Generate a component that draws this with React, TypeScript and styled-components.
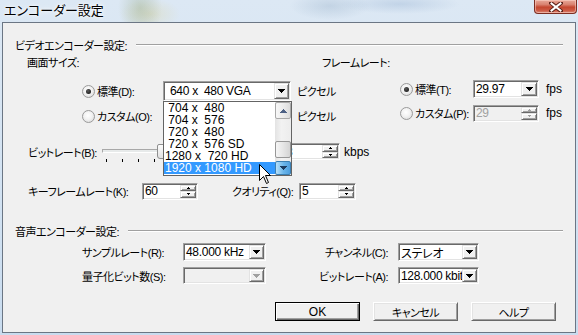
import React from 'react';
import styled, { createGlobalStyle, css } from 'styled-components';

const GlobalStyle = createGlobalStyle`
  html, body { margin: 0; padding: 0; }
  body {
    width: 578px; height: 335px; overflow: hidden; background: #cfdff0;
    font-family: "Liberation Sans", "Noto Sans CJK JP", sans-serif;
    font-size: 12px; color: #000;
    font-feature-settings: "palt" 1;
  }
  * { box-sizing: border-box; }
`;

const jp = css`
  font-size: 11px;
  letter-spacing: -0.5px;
`;

const sunken = css`
  border: 1px solid;
  border-color: #a0a0a0 #ffffff #ffffff #a0a0a0;
  box-shadow: inset 1px 1px 0 #696969, inset -1px -1px 0 #e3e3e3;
  padding: 1px;
`;

const raised = css`
  background: #f0f0f0;
  border: 1px solid;
  border-color: #e3e3e3 #696969 #696969 #e3e3e3;
  box-shadow: inset 1px 1px 0 #ffffff, inset -1px -1px 0 #a0a0a0;
`;

const Window = styled.div`
  width: 578px;
  height: 335px;
  display: flex;
  flex-direction: column;
  padding: 0 2px 2px 2px;
  background:
    radial-gradient(ellipse 22px 30px at 140px 8px, rgba(140, 160, 120, 0.35), transparent),
    radial-gradient(ellipse 30px 16px at 150px 14px, rgba(220, 210, 150, 0.35), transparent),
    radial-gradient(ellipse 40px 14px at 330px 6px, rgba(120, 150, 180, 0.25), transparent),
    radial-gradient(ellipse 60px 10px at 400px 4px, rgba(90, 130, 180, 0.2), transparent),
    linear-gradient(180deg, #dce8f4 0%, #d2e2f2 60%, #c9dcef 100%);
`;

const TitleBar = styled.div`
  height: 22px;
  flex: none;
  display: flex;
  align-items: flex-start;
  justify-content: space-between;
`;

const Title = styled.span`
  font-size: 13px;
  line-height: 21px;
  padding-left: 2px;
  color: #000;
  text-shadow: 0 0 6px #fff, 0 0 3px #fff;
`;

const CloseButton = styled.div`
  width: 43px;
  height: 14px;
  margin-right: -1px;
  border: 1px solid #7d2e22;
  border-top: none;
  border-radius: 0 0 4px 4px;
  background: linear-gradient(180deg, #e8a898 0%, #d98270 35%, #c4472f 55%, #cc5a44 80%, #d98a78 100%);
  box-shadow: inset 0 0 0 1px rgba(255, 220, 210, 0.5);
  display: flex;
  align-items: center;
  justify-content: center;
`;

const Client = styled.div`
  flex: 1;
  display: flex;
  flex-direction: column;
  background: #f0f0f0;
  border: 1px solid #6b7684;
`;

const SectionHeader = styled.div<{ $mt: number }>`
  display: flex;
  align-items: center;
  height: 14px;
  margin-top: ${(p) => p.$mt}px;
  padding: 0 12px 0 12px;
  flex: none;
`;

const HeaderText = styled.span`
  ${jp};
  white-space: nowrap;
`;

const Rule = styled.div`
  flex: 1;
  margin-left: 9px;
  height: 2px;
  border-top: 1px solid #a0a0a0;
  border-bottom: 1px solid #ffffff;
`;

const TopGrid = styled.div`
  display: grid;
  grid-template-columns: 319px 1fr;
  margin-top: 3px;
  flex: none;
`;

const Column = styled.div`
  display: flex;
  flex-direction: column;
`;

const Row = styled.div<{ $mt: number; $h: number; $pl?: number }>`
  display: flex;
  align-items: center;
  flex: none;
  height: ${(p) => p.$h}px;
  margin-top: ${(p) => p.$mt}px;
  padding-left: ${(p) => p.$pl ?? 0}px;
`;

const Label = styled.span<{ $w?: number; $ml?: number; $right?: boolean }>`
  ${jp};
  flex: none;
  white-space: nowrap;
  ${(p) => (p.$w ? `width: ${p.$w}px;` : '')}
  margin-left: ${(p) => p.$ml ?? 0}px;
  text-align: ${(p) => (p.$right ? 'right' : 'left')};
`;

const Unit = styled.span<{ $ml?: number }>`
  flex: none;
  white-space: nowrap;
  margin-left: ${(p) => p.$ml ?? 0}px;
`;

const Radio = styled.span<{ $checked?: boolean }>`
  flex: none;
  width: 13px;
  height: 13px;
  border-radius: 50%;
  border: 1px solid #9a9a9a;
  background: radial-gradient(circle at 45% 40%, #ffffff 0%, #f2f2f2 45%, #d4d4d4 100%);
  display: flex;
  align-items: center;
  justify-content: center;
  margin-right: 2px;
  &::after {
    content: '';
    width: 5px;
    height: 5px;
    border-radius: 50%;
    background: radial-gradient(circle at 40% 35%, #5a5a5a, #0a0a0a);
    display: ${(p) => (p.$checked ? 'block' : 'none')};
  }
`;

const Field = styled.div<{ $w: number; $h: number; $ml?: number; $disabled?: boolean }>`
  ${sunken};
  position: relative;
  flex: none;
  width: ${(p) => p.$w}px;
  height: ${(p) => p.$h}px;
  margin-left: ${(p) => p.$ml ?? 0}px;
  display: flex;
  align-items: stretch;
  background: ${(p) => (p.$disabled ? '#f0f0f0' : '#ffffff')};
`;

const FieldText = styled.span<{ $pl?: number; $gray?: boolean }>`
  flex: 1;
  min-width: 0;
  display: flex;
  align-items: center;
  padding-left: ${(p) => p.$pl ?? 1}px;
  white-space: pre;
  overflow: hidden;
  letter-spacing: -0.3px;
  color: ${(p) => (p.$gray ? '#a0a0a0' : '#000')};
`;

const ArrowBtn = styled.span<{ $w: number }>`
  ${raised};
  flex: none;
  width: ${(p) => p.$w}px;
  display: flex;
  align-items: center;
  justify-content: center;
`;

const SpinBtns = styled.span`
  flex: none;
  width: 16px;
  display: flex;
  flex-direction: column;
`;

const SpinBtn = styled.span`
  ${raised};
  flex: 1;
  display: flex;
  align-items: center;
  justify-content: center;
`;

const SliderBox = styled.div<{ $w: number }>`
  position: relative;
  flex: none;
  align-self: flex-start;
  width: ${(p) => p.$w}px;
  height: 19px;
  display: flex;
  flex-direction: column;
`;

const Channel = styled.div`
  margin-top: 6px;
  height: 4px;
  border: 1px solid;
  border-color: #a8a8a8 #ffffff #ffffff #a8a8a8;
  background: #e7eaea;
`;

const Ticks = styled.div`
  display: flex;
  gap: 15px;
  margin-top: 6px;
  padding-left: 4px;
`;

const Tick = styled.span`
  width: 1px;
  height: 3px;
  background: #000;
  flex: none;
`;

const Thumb = styled.span`
  position: absolute;
  left: 55px;
  top: 1px;
  width: 11px;
  height: 15px;
  border: 1px solid #8e8f8f;
  border-radius: 2px 2px 3px 3px;
  background: linear-gradient(180deg, #fcfcfc, #e2e2e2);
`;

const ComboWrap = styled.div`
  position: relative;
  flex: none;
`;

const DropList = styled.div`
  position: absolute;
  left: 0;
  top: 100%;
  width: 129px;
  height: 75px;
  background: #fff;
  border: 1px solid #646464;
  display: flex;
  z-index: 5;
`;

const ListItems = styled.div`
  flex: 1;
  display: flex;
  flex-direction: column;
  overflow: hidden;
`;

const ListItem = styled.div<{ $sel?: boolean }>`
  height: 12px;
  line-height: 12px;
  flex: none;
  padding-left: 1px;
  white-space: pre;
  background: ${(p) => (p.$sel ? '#3399ff' : 'transparent')};
  color: ${(p) => (p.$sel ? '#fff' : '#000')};
`;

const ScrollBar = styled.div`
  flex: none;
  width: 16px;
  display: flex;
  flex-direction: column;
  background: linear-gradient(90deg, #e3e3e3, #f2f2f2 40%, #ececec);
`;

const ScrollBtn = styled.div<{ $h: number; $hot?: boolean }>`
  flex: none;
  height: ${(p) => p.$h}px;
  border: 1px solid ${(p) => (p.$hot ? '#3c7fb1' : '#a9a9a9')};
  border-radius: 2px;
  background: ${(p) =>
    p.$hot
      ? 'linear-gradient(90deg, #b9e0f8, #6ab5ea 55%, #4f9fde)'
      : 'linear-gradient(90deg, #f7f7f7, #ececec 50%, #dcdcdc)'};
  display: flex;
  align-items: center;
  justify-content: center;
`;

const Track = styled.div`
  flex: 1;
  display: flex;
  flex-direction: column;
  justify-content: flex-end;
  padding-bottom: 3px;
`;

const ScrollThumb = styled.div`
  height: 17px;
  border: 1px solid #979797;
  border-radius: 2px;
  background: linear-gradient(90deg, #f5f5f5, #e6e6e6 50%, #d4d4d4);
`;

const CursorLayer = styled.svg`
  position: absolute;
  left: 95px;
  top: 62px;
  z-index: 6;
`;

const ButtonRow = styled.div`
  display: flex;
  gap: 13px;
  margin-top: 18px;
  padding-left: 272px;
  flex: none;
`;

const PushButton = styled.div<{ $default?: boolean }>`
  width: 85px;
  height: 19px;
  display: flex;
  align-items: center;
  justify-content: center;
  background: #f0f0f0;
  border: 1px solid;
  ${(p) =>
    p.$default
      ? css`
          border-color: #000;
          box-shadow: inset 1px 1px 0 #fff, inset -1px -1px 0 #696969, inset -2px -2px 0 #a0a0a0;
        `
      : css`
          border-color: #fff #696969 #696969 #fff;
          box-shadow: inset 1px 1px 0 #e3e3e3, inset -1px -1px 0 #a0a0a0;
        `}
`;

const ButtonText = styled.span<{ $latin?: boolean }>`
  font-size: ${(p) => (p.$latin ? '12px' : '11px')};
  letter-spacing: ${(p) => (p.$latin ? '0' : '-0.5px')};
`;

const PixelArrow: React.FC<{ up?: boolean; color?: string }> = ({ up, color = '#000' }) => (
  <svg width="7" height="4" shapeRendering="crispEdges" style={up ? { transform: 'scaleY(-1)' } : undefined}>
    <rect x="0" y="0" width="7" height="1" fill={color} />
    <rect x="1" y="1" width="5" height="1" fill={color} />
    <rect x="2" y="2" width="3" height="1" fill={color} />
    <rect x="3" y="3" width="1" height="1" fill={color} />
  </svg>
);

const TinyArrow: React.FC<{ up?: boolean; color?: string }> = ({ up, color = '#000' }) => (
  <svg width="3" height="2" shapeRendering="crispEdges">
    {up ? (
      <>
        <rect x="1" y="0" width="1" height="1" fill={color} />
        <rect x="0" y="1" width="3" height="1" fill={color} />
      </>
    ) : (
      <>
        <rect x="0" y="0" width="3" height="1" fill={color} />
        <rect x="1" y="1" width="1" height="1" fill={color} />
      </>
    )}
  </svg>
);

const Combo: React.FC<{ w: number; h: number; text: string; ml?: number; disabled?: boolean; btn?: number; pl?: number }> = ({
  w,
  h,
  text,
  ml,
  disabled,
  btn = 15,
  pl,
}) => (
  <Field $w={w} $h={h} $ml={ml} $disabled={disabled}>
    <FieldText $pl={pl}>{text}</FieldText>
    <ArrowBtn $w={btn}>
      <PixelArrow color={disabled ? '#a0a0a0' : '#000'} />
    </ArrowBtn>
  </Field>
);

const Spin: React.FC<{ w: number; h: number; text: string; ml?: number; disabled?: boolean }> = ({ w, h, text, ml, disabled }) => (
  <Field $w={w} $h={h} $ml={ml} $disabled={disabled}>
    <FieldText $gray={disabled}>{text}</FieldText>
    <SpinBtns>
      <SpinBtn>
        <TinyArrow up color={disabled ? '#a0a0a0' : '#000'} />
      </SpinBtn>
      <SpinBtn>
        <TinyArrow color={disabled ? '#a0a0a0' : '#000'} />
      </SpinBtn>
    </SpinBtns>
  </Field>
);

const sizes = [' 704 x  480', ' 704 x  576', ' 720 x  480', ' 720 x  576 SD', '1280 x  720 HD', '1920 x 1080 HD'];

export default function App() {
  return (
    <>
      <GlobalStyle />
      <Window>
        <TitleBar>
          <Title>エンコーダー設定</Title>
          <CloseButton>
            <svg width="14" height="10" viewBox="0 0 14 10">
              <path d="M2 1 L12 9 M12 1 L2 9" stroke="#5a2018" strokeWidth="4" strokeLinecap="round" />
              <path d="M2.5 1.5 L11.5 8.5 M11.5 1.5 L2.5 8.5" stroke="#fff" strokeWidth="2" strokeLinecap="square" />
            </svg>
          </CloseButton>
        </TitleBar>
        <Client>
          <SectionHeader $mt={15}>
            <HeaderText>ビデオエンコーダー設定:</HeaderText>
            <Rule />
          </SectionHeader>

          <TopGrid>
            <Column>
              <Row $mt={0} $h={14} $pl={24}>
                <Label>画面サイズ:</Label>
              </Row>
              <Row $mt={12} $h={20} $pl={79}>
                <Radio $checked />
                <Label $w={66}>標準(D):</Label>
                <ComboWrap>
                  <Combo w={128} h={20} text="640 x  480 VGA" pl={5} />
                  <DropList>
                    <ListItems>
                      {sizes.map((s, i) => (
                        <ListItem key={s} $sel={i === sizes.length - 1}>
                          {s}
                        </ListItem>
                      ))}
                    </ListItems>
                    <ScrollBar>
                      <ScrollBtn $h={17}>
                        <PixelArrow up color="#4d6185" />
                      </ScrollBtn>
                      <Track>
                        <ScrollThumb />
                      </Track>
                      <ScrollBtn $h={14} $hot>
                        <PixelArrow color="#1c3c60" />
                      </ScrollBtn>
                    </ScrollBar>
                    <CursorLayer width="13" height="21" viewBox="0 0 13 21">
                      <path
                        d="M0.5 0.5 L0.5 16.5 L4.5 12.5 L7.5 19.5 L9.5 18.5 L6.5 11.5 L11.5 11.5 Z"
                        fill="#fff"
                        stroke="#000"
                        strokeWidth="1"
                      />
                    </CursorLayer>
                  </DropList>
                </ComboWrap>
                <Label $ml={6}>ピクセル</Label>
              </Row>
              <Row $mt={5} $h={20} $pl={79}>
                <Radio />
                <Label $w={66}>カスタム(O):</Label>
                <Spin w={128} h={20} text="" disabled />
                <Label $ml={6}>ピクセル</Label>
              </Row>
            </Column>
            <Column>
              <Row $mt={0} $h={14}>
                <Label>フレームレート:</Label>
              </Row>
              <Row $mt={11} $h={18} $pl={78}>
                <Radio $checked />
                <Label $w={58}>標準(T):</Label>
                <Combo w={66} h={18} text="29.97" btn={16} />
                <Unit $ml={7}>fps</Unit>
              </Row>
              <Row $mt={7} $h={16} $pl={78}>
                <Radio />
                <Label $w={58}>カスタム(P):</Label>
                <Spin w={66} h={17} text="29" disabled />
                <Unit $ml={7}>fps</Unit>
              </Row>
            </Column>
          </TopGrid>

          <Row $mt={17} $h={17} $pl={25}>
            <Label $w={74}>ビットレート(B):</Label>
            <SliderBox $w={160}>
              <Channel />
              <Ticks>
                {Array.from({ length: 10 }).map((_, i) => (
                  <Tick key={i} />
                ))}
              </Ticks>
              <Thumb />
            </SliderBox>
            <Spin w={76} h={17} text="2048" ml={2} />
            <Unit $ml={4}>kbps</Unit>
          </Row>

          <Row $mt={23} $h={16} $pl={25}>
            <Label $w={114}>キーフレームレート(K):</Label>
            <Spin w={56} h={17} text="60" />
            <Label $w={67} $ml={34}>
              クオリティ(Q):
            </Label>
            <Spin w={57} h={17} text="5" />
          </Row>

          <SectionHeader $mt={25}>
            <HeaderText>音声エンコーダー設定:</HeaderText>
            <Rule />
          </SectionHeader>

          <Row $mt={5} $h={18} $pl={79}>
            <Label $w={101}>サンプルレート(R):</Label>
            <Combo w={83} h={18} text="48.000 kHz" />
            <Label $w={122} $right>
              チャンネル(C):
            </Label>
            <Combo w={81} h={18} text="ステレオ" ml={10} />
          </Row>
          <Row $mt={6} $h={17} $pl={79}>
            <Label $w={101}>量子化ビット数(S):</Label>
            <Combo w={83} h={17} text="" disabled />
            <Label $w={122} $right>
              ビットレート(A):
            </Label>
            <Combo w={81} h={17} text="128.000 kbit" ml={10} />
          </Row>

          <ButtonRow>
            <PushButton $default>
              <ButtonText $latin>OK</ButtonText>
            </PushButton>
            <PushButton>
              <ButtonText>キャンセル</ButtonText>
            </PushButton>
            <PushButton>
              <ButtonText>ヘルプ</ButtonText>
            </PushButton>
          </ButtonRow>
        </Client>
      </Window>
    </>
  );
}
